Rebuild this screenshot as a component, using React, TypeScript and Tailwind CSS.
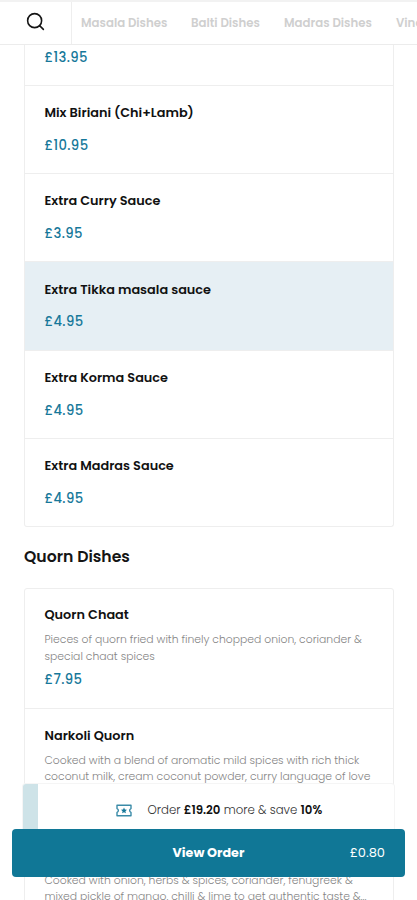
import React from 'react';
import { Search } from 'lucide-react';

const categories = [
    { name: 'Masala Dishes', className: 'w-[87px] mr-[23px]' },
    { name: 'Balti Dishes', className: 'w-[70px] mr-[23px]' },
    { name: 'Madras Dishes', className: 'w-[89px] mr-[23px]' },
    { name: 'Vindaloo Dishes', className: 'w-[100px]' },
];

const extras = [
    { name: 'Mix Biriani (Chi+Lamb)', price: '£10.95', active: false },
    { name: 'Extra Curry Sauce', price: '£3.95', active: false },
    { name: 'Extra Tikka masala sauce', price: '£4.95', active: true },
    { name: 'Extra Korma Sauce', price: '£4.95', active: false },
    { name: 'Extra Madras Sauce', price: '£4.95', active: false },
];

const quornDishes = [
    {
        name: 'Quorn Chaat',
        lines: ['Pieces of quorn fried with finely chopped onion, coriander &', 'special chaat spices'],
        price: '£7.95',
    },
    {
        name: 'Narkoli Quorn',
        lines: ['Cooked with a blend of aromatic mild spices with rich thick', 'coconut milk, cream coconut powder, curry language of love'],
        price: '£8.95',
    },
    {
        name: 'Achari Quorn',
        lines: ['Cooked with onion, herbs & spices, coriander, fenugreek &', 'mixed pickle of mango, chilli & lime to get authentic taste &...'],
        price: '£8.95',
    },
];

function Title({ children }: { children: React.ReactNode }) {
    return <h3 className="text-[12.85px] leading-5 font-semibold text-[#111111] whitespace-nowrap">{children}</h3>;
}

function Price({ children }: { children: React.ReactNode }) {
    return <p className="text-[13.2px] leading-5 font-medium tracking-[0.4px] text-[#16789a]">{children}</p>;
}

export default function App() {
    return (
        <div className="relative w-[417px] h-[900px] overflow-hidden bg-white font-['Poppins','Inter',sans-serif]">
            <header className="flex h-[45px] border-t-2 border-b border-t-[#f2f2f2] border-b-[#ececec] overflow-hidden">
                <div className="w-[72px] shrink-0 border-r border-[#eeeeee] pl-[25px] pt-[9px]">
                    <Search className="size-[21px] text-[#151515]" strokeWidth={1.8} />
                </div>
                <nav className="flex items-center pl-[9px] pt-px text-[11.75px] font-semibold text-[#cfcfcf] whitespace-nowrap">
                    {categories.map((item) => (
                        <span key={item.name} className={`shrink-0 ${item.className}`}>{item.name}</span>
                    ))}
                </nav>
            </header>

            <main className="px-6">
                <section className="w-[370px] border border-t-0 border-[#eeeeee] rounded-b-[3px]">
                    <div className="h-[41px] border-b border-[#eeeeee] pl-[19.5px] pt-[3px]">
                        <Price>£13.95</Price>
                    </div>
                    {extras.map((item) => (
                        <div
                            key={item.name}
                            className={`h-[88.2px] pl-[19.5px] pt-[17.3px] border-b border-[#eeeeee] last:border-b-0 last:h-[87px] ${item.active ? 'bg-[#e6eff4]' : ''}`}
                        >
                            <Title>{item.name}</Title>
                            <div className="mt-[12.8px]">
                                <Price>{item.price}</Price>
                            </div>
                        </div>
                    ))}
                </section>

                <h2 className="mt-[18px] mb-[19px] text-[15.7px] leading-6 font-semibold text-[#151515]">Quorn Dishes</h2>

                <section className="w-[370px] border border-[#eeeeee] rounded-[3px]">
                    {quornDishes.map((item) => (
                        <div key={item.name} className="h-[120.3px] pl-[19.5px] pt-[16.7px] border-b border-[#eeeeee]">
                            <Title>{item.name}</Title>
                            <div className="mt-[6.8px] h-[34px] text-[10.8px] leading-[16.5px] font-light text-[#858585] whitespace-nowrap">
                                {item.lines.map((line) => (
                                    <p key={line}>{line}</p>
                                ))}
                            </div>
                            <div className="mt-[4.2px]">
                                <Price>{item.price}</Price>
                            </div>
                        </div>
                    ))}
                </section>
            </main>

            {/* order bar */}
            <div className="absolute left-3 right-3 bottom-[23px]">
                <div className="mx-[10px] h-[46px] flex bg-white border border-b-0 border-[#f5f5f5] rounded-t-[4px] overflow-hidden">
                    <div className="w-[14.5px] bg-[#cee3e8]" />
                    <div className="flex items-center pl-[78px] pt-[8px]">
                        <svg width="16" height="13" viewBox="0 0 16 13" fill="none">
                            <path d="M1 1.2h14v3.4a2 2 0 0 0 0 3.8v3.4H1V8.4a2 2 0 0 0 0-3.8z" stroke="#3a8ba8" strokeWidth="1.4" strokeLinejoin="round" />
                            <path d="m8 3.6.9 2 2.1.2-1.6 1.4.5 2.1L8 8.2 6.1 9.3l.5-2.1L5 5.8l2.1-.2z" fill="#16789a" />
                        </svg>
                        <p className="ml-4 text-[11.75px] font-light text-[#333333] whitespace-nowrap">
                            Order <b className="font-semibold text-[#111111]">£19.20</b> more &amp; save <b className="font-semibold text-[#111111]">10%</b>
                        </p>
                    </div>
                </div>
                <button className="relative flex w-full h-[48px] items-center justify-center rounded-[4px] bg-[#107796] text-white">
                    <span className="text-[12.7px] font-bold">View Order</span>
                    <span className="absolute right-5 text-[13px]">£0.80</span>
                </button>
            </div>
        </div>
    );
}
